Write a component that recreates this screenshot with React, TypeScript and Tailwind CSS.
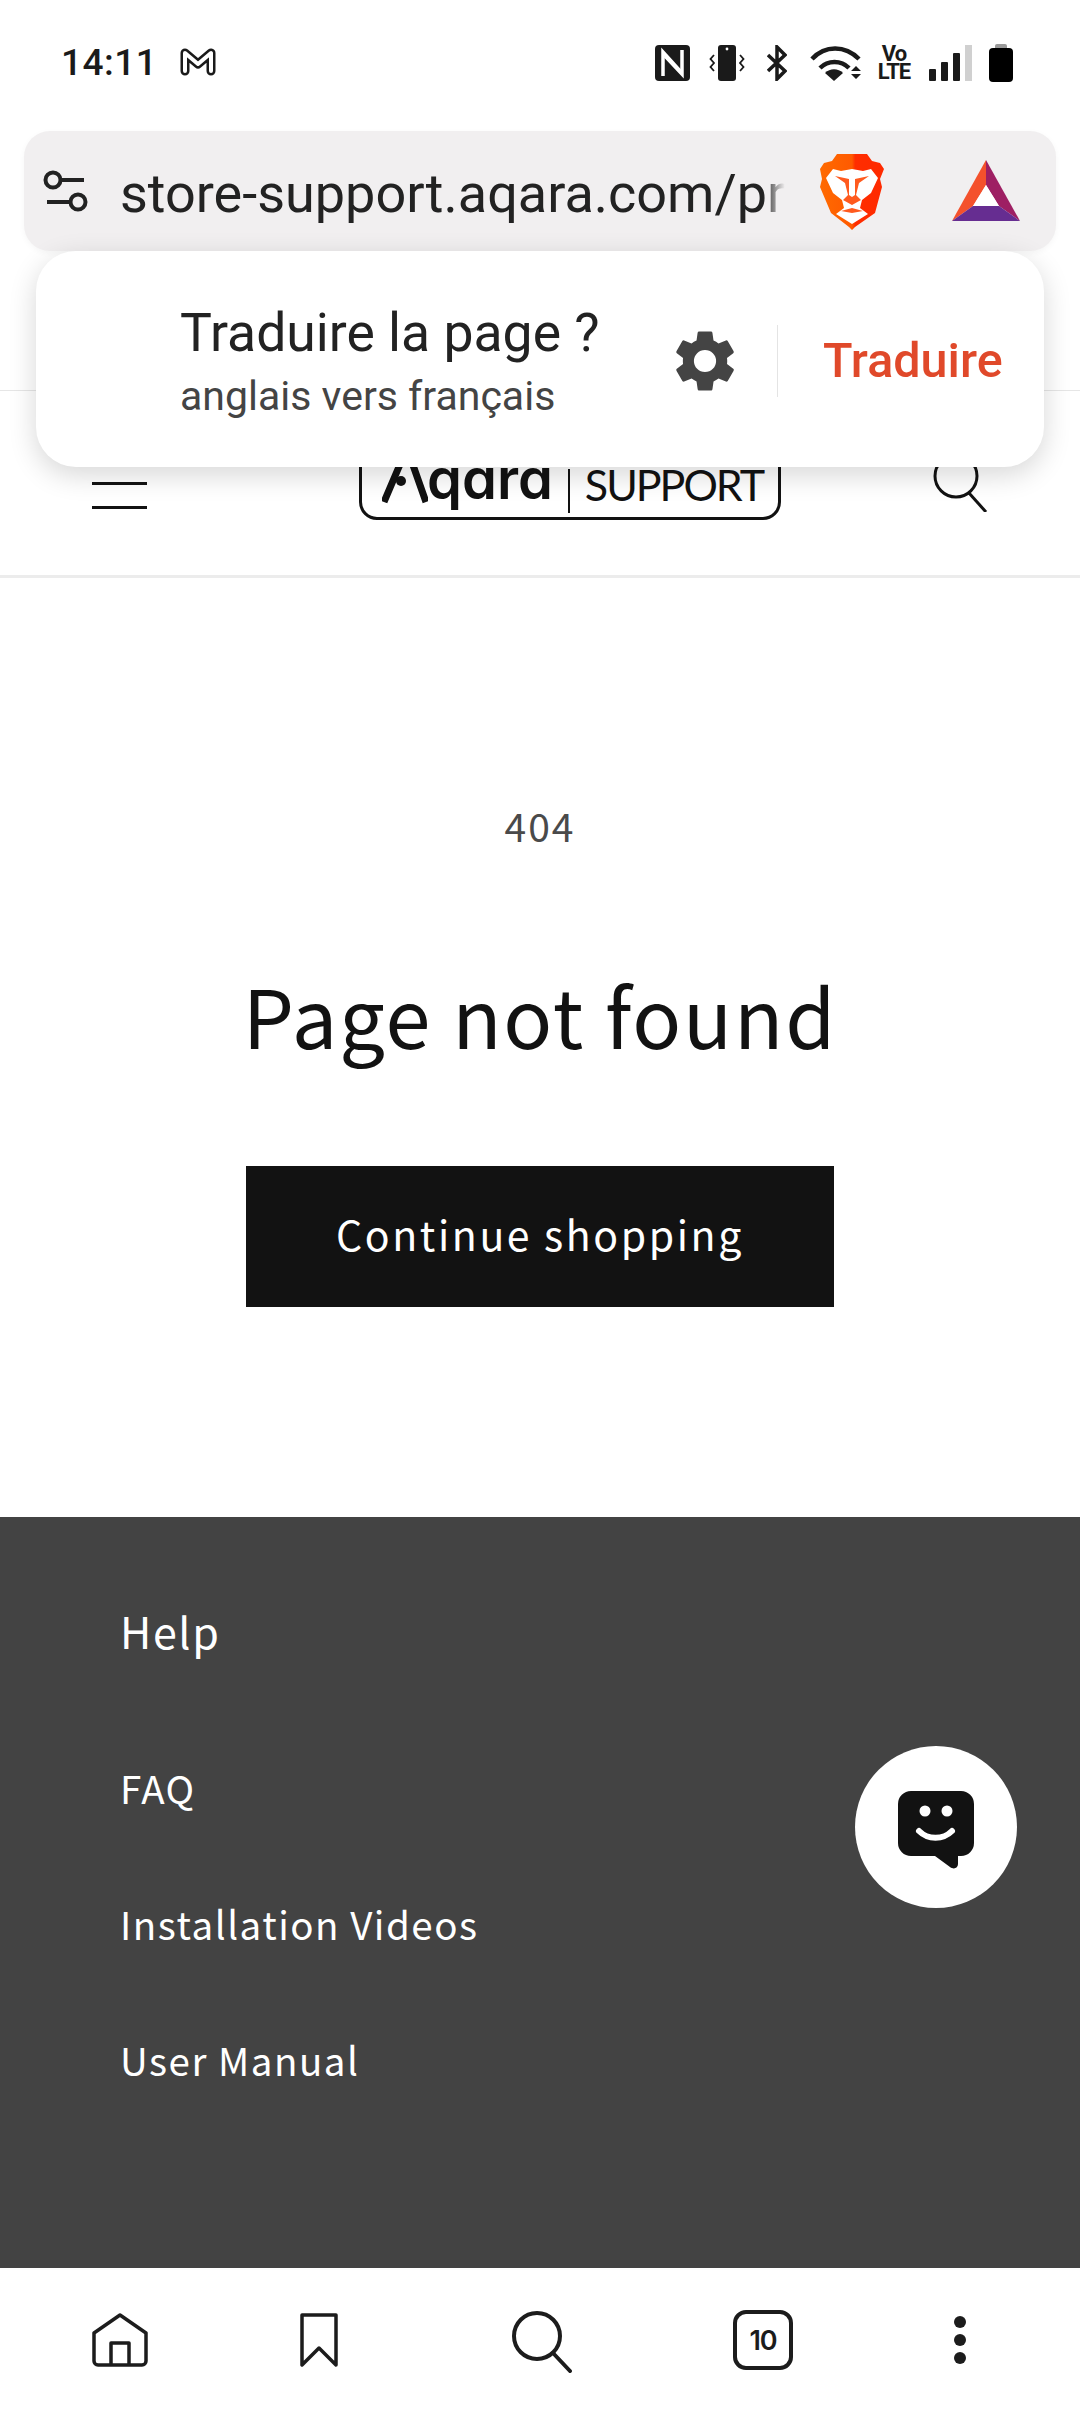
export default function App() {
  return (
    <div className="relative flex h-[2412px] w-full flex-col overflow-hidden bg-white font-['Noto_Sans_CJK_SC',sans-serif] text-[#121212]">
      {/* Status bar */}
      <div className="flex h-[131px] shrink-0 items-start justify-between pl-[61px] pr-[67px] pt-[44px]">
        <div className="flex h-[36px] items-center gap-[23px]">
          <span className="font-['Roboto',sans-serif] text-[37px] font-medium leading-none tracking-[0.5px] text-[#1a1a1a]">14:11</span>
          <svg width="36" height="28" viewBox="0 0 36 28" fill="none" strokeLinejoin="round" strokeLinecap="round">
            <path d="M5 23V5l13 11L31 5v18" stroke="#1a1a1a" strokeWidth="9" />
            <path d="M5 23V5l13 11L31 5v18" stroke="#fff" strokeWidth="4" />
          </svg>
        </div>
        <div className="flex h-[38px] items-center">
          <svg width="35" height="36" viewBox="0 0 35 36">
            <rect width="35" height="36" rx="4" fill="#1a1a1a" />
            <path d="M8 31V7l18 20" fill="none" stroke="#fff" strokeWidth="3.500" />
            <path d="M27 5v24L10 11" fill="none" stroke="#fff" strokeWidth="3.500" />
          </svg>
          <svg className="ml-[19px]" width="36" height="36" viewBox="0 0 36 36">
            <rect x="9" width="18" height="36" rx="3" fill="#1a1a1a" />
            <circle cx="18" cy="4" r="1.400" fill="#fff" />
            <path d="M5 10l-3.500 4L5 18l-3.500 4L5 26M31 10l3.500 4L31 18l3.500 4L31 26" fill="none" stroke="#1a1a1a" strokeWidth="1.800" />
          </svg>
          <svg className="ml-[22px]" width="20" height="36" viewBox="0 0 20 36" fill="none" stroke="#1a1a1a" strokeWidth="3.500">
            <path d="M1 10l17 16-8 8V2l8 8L1 26" />
          </svg>
          <svg className="ml-[23px]" width="52" height="36" viewBox="0 0 52 36" fill="none" stroke="#1a1a1a" strokeWidth="4.500">
            <path d="M2 14C15 0 35 0 49 14" />
            <path d="M10 23c8-8 21-8 29 0" />
            <path d="M24 36l-9-8c5-5 13-5 18 0z" fill="#1a1a1a" stroke="none" />
            <path d="M41 26l5-5 5 5zM41 29l5 5 5-5z" fill="#1a1a1a" stroke="none" />
          </svg>
          <div className="ml-[15px] flex w-[34px] flex-col items-center font-['Roboto',sans-serif] text-[22px] font-bold leading-[18px] tracking-[-1px] text-[#1a1a1a]">
            <span>Vo</span>
            <span>LTE</span>
          </div>
          <div className="ml-[18px] flex h-[36px] items-end gap-[5px]">
            <div className="h-[12px] w-[7px] rounded-[1px] bg-[#1a1a1a]" />
            <div className="h-[19px] w-[7px] rounded-[1px] bg-[#1a1a1a]" />
            <div className="h-[28px] w-[7px] rounded-[1px] bg-[#1a1a1a]" />
            <div className="h-[36px] w-[7px] bg-[#d0d0d0]" />
          </div>
          <div className="ml-[17px] flex flex-col items-center">
            <div className="h-[4px] w-[12px] rounded-t-[2px] bg-[#9a9a9a]" />
            <div className="h-[34px] w-[24px] rounded-[4px] bg-black" />
          </div>
        </div>
      </div>

      {/* Address bar */}
      <div className="mx-6 flex h-[120px] shrink-0 items-start rounded-[26px] bg-[#f1eff0] shadow-[0_2px_6px_rgba(0,0,0,0.04)]">
        <svg className="ml-[19px] mt-[39px]" width="46" height="43" viewBox="0 0 46 43" fill="none" stroke="#222" strokeWidth="4">
          <circle cx="10" cy="10" r="7.500" />
          <path d="M18 10h23M4 32h24" />
          <circle cx="35" cy="32" r="7.500" />
        </svg>
        <div className="relative ml-[31px] mt-[27px] h-[72px] w-[665px] overflow-hidden whitespace-nowrap font-['Roboto',sans-serif] text-[54px] leading-[72px] text-[#222]">
          store-support.aqara.com/products
          <div className="absolute inset-y-0 right-0 w-[22px] bg-gradient-to-r from-transparent to-[#f1eff0]" />
        </div>
        <svg className="ml-[35px] mt-[22px]" width="64" height="77" viewBox="0 0 64 77">
          <defs>
            <linearGradient id="brave" x1="0" x2="1" y1="0" y2="0">
              <stop offset="0" stopColor="#ff6a00" />
              <stop offset="0.5" stopColor="#ff5a00" />
              <stop offset="0.55" stopColor="#ff2d00" />
              <stop offset="1" stopColor="#ff2a00" />
            </linearGradient>
          </defs>
          <path d="M17 1h30l5 7 8 2 4 6-4 10 2 8-7 26-20 14-3 3-3-3L11 60 0 34l2-8-2-10 4-6 8-2z" fill="url(#brave)" />
          <path d="M13 16l8 2 11-2 11 2 8-2 7 9-7 15-9 7-2 8 8 6-16 10-16-10 8-6-2-8-9-7-7-15z" fill="#fff" />
          <path d="M15 23l14 3v16l3 2 3-2V26l14-3-10 7-3 12 5 5-9 5-9-5 5-5-3-12z" fill="#ff5a1e" />
          <path d="M21 58l11-3 11 3-11 2z" fill="#ff5a1e" />
        </svg>
        <svg className="ml-[68px] mt-[29px]" width="68" height="61" viewBox="0 0 68 61">
          <path d="M34 0L0 61l21-15L34 25z" fill="#f4512c" />
          <path d="M34 0l34 61-21-15-13-21z" fill="#9e1f63" />
          <path d="M0 61l21-15h26l21 15z" fill="#662d91" />
          <path d="M34 25l13 21H21z" fill="#fff" />
        </svg>
      </div>

      {/* Announcement bar behind the prompt */}
      <div className="h-[140px] shrink-0 border-b border-[#e6e6e6]" />

      {/* Store header */}
      <header className="flex h-[187px] shrink-0 items-start border-b-[3px] border-[#ececec] pl-[92px]">
        <div className="mt-[91px] flex w-[55px] flex-col gap-[21px]">
          <div className="h-[3px] bg-[#121212]" />
          <div className="h-[3px] bg-[#121212]" />
        </div>
        <div className="ml-[212px] mt-[39px] flex h-[90px] w-[422px] shrink-0 items-end rounded-[18px] border-[3px] border-[#121212] pb-[12px] pl-[20px]">
          <svg className="mb-[1px]" width="46" height="60" viewBox="0 0 46 60">
            <path d="M2 58L25 4 44 58" fill="none" stroke="#121212" strokeWidth="7" />
            <circle cx="19" cy="37" r="5" fill="#121212" />
          </svg>
          <span className="-ml-[1px] mb-[-4px] font-['Inter',sans-serif] text-[56px] font-semibold leading-[60px] text-[#121212] [font-feature-settings:'cv11']">qara</span>
          <div className="mb-[-8px] ml-[15px] h-[44px] w-[2px] bg-[#121212]" />
          <span className="mb-[-5px] ml-[15px] font-['Lato',sans-serif] text-[43px] leading-[50px] tracking-[-2px] text-[#121212]">SUPPORT</span>
        </div>
        <svg className="ml-[152px] mt-[49px]" width="56" height="72" viewBox="0 0 56 72" fill="none" stroke="#121212" strokeWidth="3">
          <circle cx="23" cy="36" r="21" />
          <path d="M36 53l17 19" />
        </svg>
      </header>

      {/* 404 */}
      <main className="flex h-[939px] shrink-0 flex-col items-center pt-[218px]">
        <p className="text-[39px] leading-[58px] tracking-[2px] text-[#4a4a4a]">404</p>
        <h1 className="mt-[99px] text-[81px] font-normal leading-[122px] tracking-[1.8px]">Page not found</h1>
        <a className="mt-[91px] flex h-[141px] w-[588px] items-center justify-center bg-[#121212] pb-[5px] text-[41px] tracking-[2.6px] text-white">Continue shopping</a>
      </main>

      {/* Footer */}
      <footer className="flex min-h-0 flex-1 flex-col bg-[#434343] pl-[120px] pt-[82px] text-white">
        <h2 className="text-[43px] leading-[62px] tracking-[1.600px]">Help</h2>
        <ul className="mt-[96px] flex flex-col gap-[76px] text-[38.5px] leading-[60px] tracking-[1.500px]">
          <li>FAQ</li>
          <li>Installation Videos</li>
          <li>User Manual</li>
        </ul>
      </footer>

      {/* Browser toolbar */}
      <nav className="relative flex h-[144px] shrink-0 items-start bg-white">
        <svg className="ml-[92px] mt-[45px]" width="56" height="54" viewBox="0 0 56 54" fill="none" stroke="#1c1c1c" strokeWidth="3.500" strokeLinejoin="round">
          <path d="M2 48V20L28 2l26 18v28a4 4 0 0 1-4 4H6a4 4 0 0 1-4-4z" />
          <path d="M19 52V30h18v22" />
        </svg>
        <svg className="ml-[152px] mt-[45px]" width="38" height="54" viewBox="0 0 38 54" fill="none" stroke="#1c1c1c" strokeWidth="3.500" strokeLinejoin="round">
          <path d="M2 2h34v50L19 35 2 52z" />
        </svg>
        <svg className="ml-[174px] mt-[43px]" width="60" height="62" viewBox="0 0 60 62" fill="none" stroke="#1c1c1c" strokeWidth="4">
          <circle cx="25" cy="25" r="23" />
          <path d="M41 42l17 18" strokeLinecap="round" />
        </svg>
        <div className="ml-[161px] mt-[42px] flex h-[60px] w-[60px] items-center justify-center rounded-[13px] border-[4px] border-[#1c1c1c] font-['Inter',sans-serif] text-[27px] font-semibold leading-none tracking-[-1px] text-[#1c1c1c]">10</div>
        <div className="ml-[161px] mt-[48px] flex flex-col gap-[6px]">
          <div className="h-[12px] w-[12px] rounded-full bg-[#1c1c1c]" />
          <div className="h-[12px] w-[12px] rounded-full bg-[#1c1c1c]" />
          <div className="h-[12px] w-[12px] rounded-full bg-[#1c1c1c]" />
        </div>
      </nav>

      {/* Translate prompt */}
      <div className="absolute left-[36px] top-[251px] flex h-[216px] w-[1008px] items-center rounded-[40px] bg-white pt-[4px] shadow-[0_8px_28px_rgba(0,0,0,0.16)]">
        <div className="ml-[144px] w-[480px] font-['Roboto',sans-serif]">
          <p className="text-[53.5px] leading-[66px] text-[#222]">Traduire la page ?</p>
          <p className="mt-[4px] text-[41px] leading-[52px] text-[#444]">anglais vers français</p>
        </div>
        <svg className="ml-[8px]" width="74" height="76" viewBox="0 0 24 24" fill="#444">
          <path d="M19.140 12.940c.04-.3.06-.61.06-.94s-.02-.64-.07-.94l2.030-1.580a.49.49 0 0 0 .12-.61l-1.920-3.320a.49.49 0 0 0-.59-.22l-2.390.96a7 7 0 0 0-1.620-.94l-.36-2.540a.48.48 0 0 0-.48-.41h-3.840a.48.48 0 0 0-.47.41l-.36 2.540c-.59.24-1.130.57-1.620.94l-2.390-.96a.48.48 0 0 0-.59.22L2.740 8.870a.48.48 0 0 0 .12.61l2.030 1.580c-.05.3-.07.63-.07.94s.02.64.07.94l-2.030 1.580a.49.49 0 0 0-.12.61l1.920 3.320c.12.22.37.29.59.22l2.390-.96c.5.38 1.030.7 1.620.94l.36 2.540c.05.24.24.41.48.41h3.840c.24 0 .44-.17.47-.41l.36-2.540c.59-.24 1.130-.56 1.620-.94l2.390.96c.22.08.47 0 .59-.22l1.920-3.320a.48.48 0 0 0-.12-.61zM12 15.600a3.600 3.600 0 1 1 0-7.200 3.600 3.600 0 0 1 0 7.200z" />
        </svg>
        <div className="ml-[35px] h-[72px] w-px bg-[#e4e4e4]" />
        <span className="ml-[45px] font-['Roboto',sans-serif] text-[48.5px] font-medium leading-none text-[#e0492a]">Traduire</span>
      </div>

      {/* Chat button */}
      <div className="absolute left-[855px] top-[1746px] flex h-[162px] w-[162px] items-center justify-center rounded-full bg-white">
        <svg className="mt-[6px]" width="76" height="78" viewBox="0 0 76 78">
          <path d="M13 0h50a13 13 0 0 1 13 13v39a13 13 0 0 1-13 13h-3v8c0 4-4 6-8 3L37 65H13A13 13 0 0 1 0 52V13A13 13 0 0 1 13 0z" fill="#121212" />
          <circle cx="27" cy="20" r="5.500" fill="#fff" />
          <circle cx="49" cy="20" r="5.500" fill="#fff" />
          <path d="M21 40c9 9 24 9 33 0" fill="none" stroke="#fff" strokeWidth="6" strokeLinecap="round" />
        </svg>
      </div>
    </div>
  );
}
